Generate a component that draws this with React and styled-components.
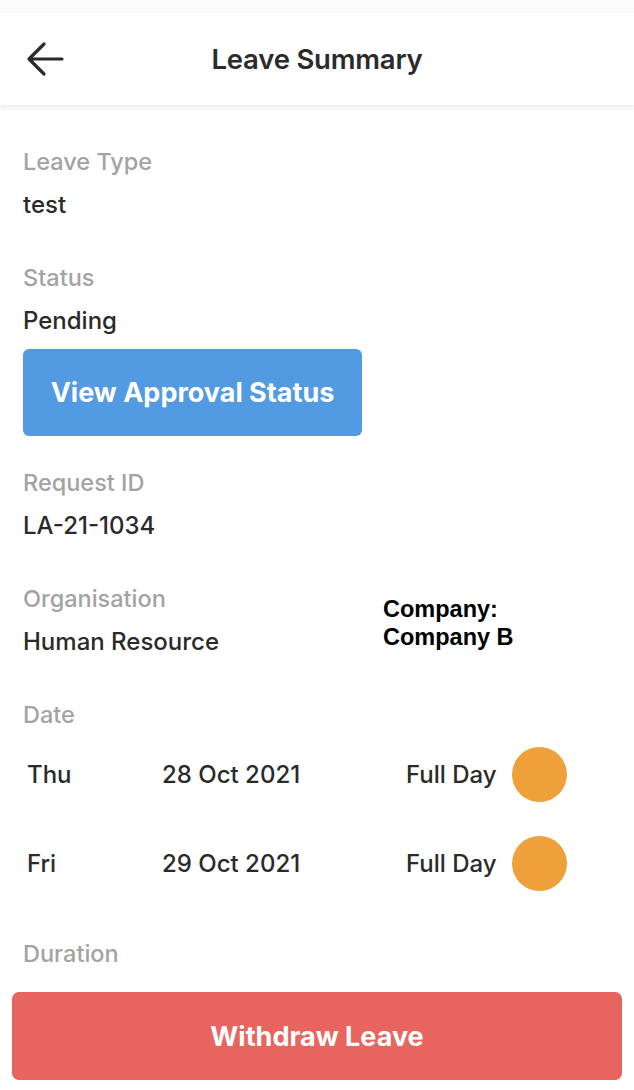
import React from "react";
import styled, { createGlobalStyle } from "styled-components";

const GlobalStyle = createGlobalStyle`
  html, body {
    margin: 0;
    padding: 0;
    background: #ffffff;
  }
  body {
    font-family: "Inter", "Noto Sans", sans-serif;
    color: #2a2a2a;
  }
`;

const Page = styled.div`
  width: 634px;
  min-height: 1090px;
  background: #fff;
  display: flex;
  flex-direction: column;
`;

const StatusBar = styled.div`
  height: 13px;
  background: #fafafa;
`;

const Header = styled.header`
  height: 92px;
  display: grid;
  grid-template-columns: 80px 1fr 80px;
  align-items: center;
  background: #fff;
  box-shadow: 0 3px 5px rgba(0, 0, 0, 0.08);
  position: relative;
  z-index: 1;
`;

const BackButton = styled.button`
  border: 0;
  background: none;
  padding: 0 0 0 26px;
  display: flex;
  align-items: center;
  cursor: pointer;
`;

const Title = styled.h1`
  margin: 0;
  text-align: center;
  font-size: 27.5px;
  font-weight: 600;
  color: #2b2b2b;
  letter-spacing: -0.2px;
`;

const Content = styled.main`
  padding: 42px 23px 0;
  display: flex;
  flex-direction: column;
`;

const Field = styled.section`
  margin-bottom: ${({ $gap }) => $gap ?? 43}px;
`;

const Label = styled.div`
  font-size: 23.5px;
  line-height: 30px;
  color: #a3a3a3;
  font-weight: 500;
`;

const Value = styled.div`
  margin-top: 13px;
  font-size: 24px;
  line-height: 30px;
  font-weight: 500;
  color: #2a2a2a;
`;

const ApprovalButton = styled.button`
  margin-top: 13px;
  width: 339px;
  height: 87px;
  border: 0;
  border-radius: 6px;
  background: #529be2;
  color: #fff;
  font-family: inherit;
  font-size: 27px;
  font-weight: 700;
  cursor: pointer;
`;

const OrgRow = styled.div`
  display: flex;
  align-items: center;
  margin-bottom: 43px;
`;

const OrgField = styled.div`
  width: 360px;
`;

const CompanyNote = styled.div`
  margin-top: 4px;
  font-family: "Liberation Sans", Arial, sans-serif;
  font-weight: 700;
  font-size: 23.5px;
  line-height: 28px;
  color: #000;
`;

const DateList = styled.div`
  display: flex;
  flex-direction: column;
  margin-bottom: 31px;
`;

const DateRow = styled.div`
  height: 89px;
  display: grid;
  grid-template-columns: 135px 244px auto;
  align-items: center;
  padding-left: 4px;
  font-size: 24px;
  font-weight: 500;
  color: #2a2a2a;
`;

const Session = styled.div`
  display: flex;
  align-items: center;
  gap: 15px;
`;

const StatusDot = styled.span`
  width: 55px;
  height: 55px;
  border-radius: 50%;
  background: ${({ $color }) => $color};
`;

const Footer = styled.footer`
  padding: 23px 12px 11px;
`;

const WithdrawButton = styled.button`
  width: 100%;
  height: 88px;
  border: 0;
  border-radius: 7px;
  background: #e8655f;
  color: #fff;
  font-family: inherit;
  font-size: 27px;
  font-weight: 700;
  cursor: pointer;
`;

const ArrowLeft = () => (
  <svg width="38" height="36" viewBox="0 0 38 36" fill="none">
    <path
      d="M4 18H36M18 3L3 18L18 33"
      stroke="#2b2b2b"
      strokeWidth="3.2"
      strokeLinecap="round"
      strokeLinejoin="round"
    />
  </svg>
);

const days = [
  { day: "Thu", date: "28 Oct 2021", session: "Full Day" },
  { day: "Fri", date: "29 Oct 2021", session: "Full Day" },
];

export default function App() {
  return (
    <>
      <GlobalStyle />
      <Page>
        <StatusBar />
        <Header>
          <BackButton aria-label="Back">
            <ArrowLeft />
          </BackButton>
          <Title>Leave Summary</Title>
          <span />
        </Header>
        <Content>
          <Field>
            <Label>Leave Type</Label>
            <Value>test</Value>
          </Field>
          <Field $gap={32}>
            <Label>Status</Label>
            <Value>Pending</Value>
            <ApprovalButton>View Approval Status</ApprovalButton>
          </Field>
          <Field>
            <Label>Request ID</Label>
            <Value>LA-21-1034</Value>
          </Field>
          <OrgRow>
            <OrgField>
              <Label>Organisation</Label>
              <Value>Human Resource</Value>
            </OrgField>
            <CompanyNote>
              Company:
              <br />
              Company B
            </CompanyNote>
          </OrgRow>
          <Label>Date</Label>
          <DateList>
            {days.map((d) => (
              <DateRow key={d.day}>
                <span>{d.day}</span>
                <span>{d.date}</span>
                <Session>
                  {d.session}
                  <StatusDot $color="#eea03b" />
                </Session>
              </DateRow>
            ))}
          </DateList>
          <Label>Duration</Label>
        </Content>
        <Footer>
          <WithdrawButton>Withdraw Leave</WithdrawButton>
        </Footer>
      </Page>
    </>
  );
}
